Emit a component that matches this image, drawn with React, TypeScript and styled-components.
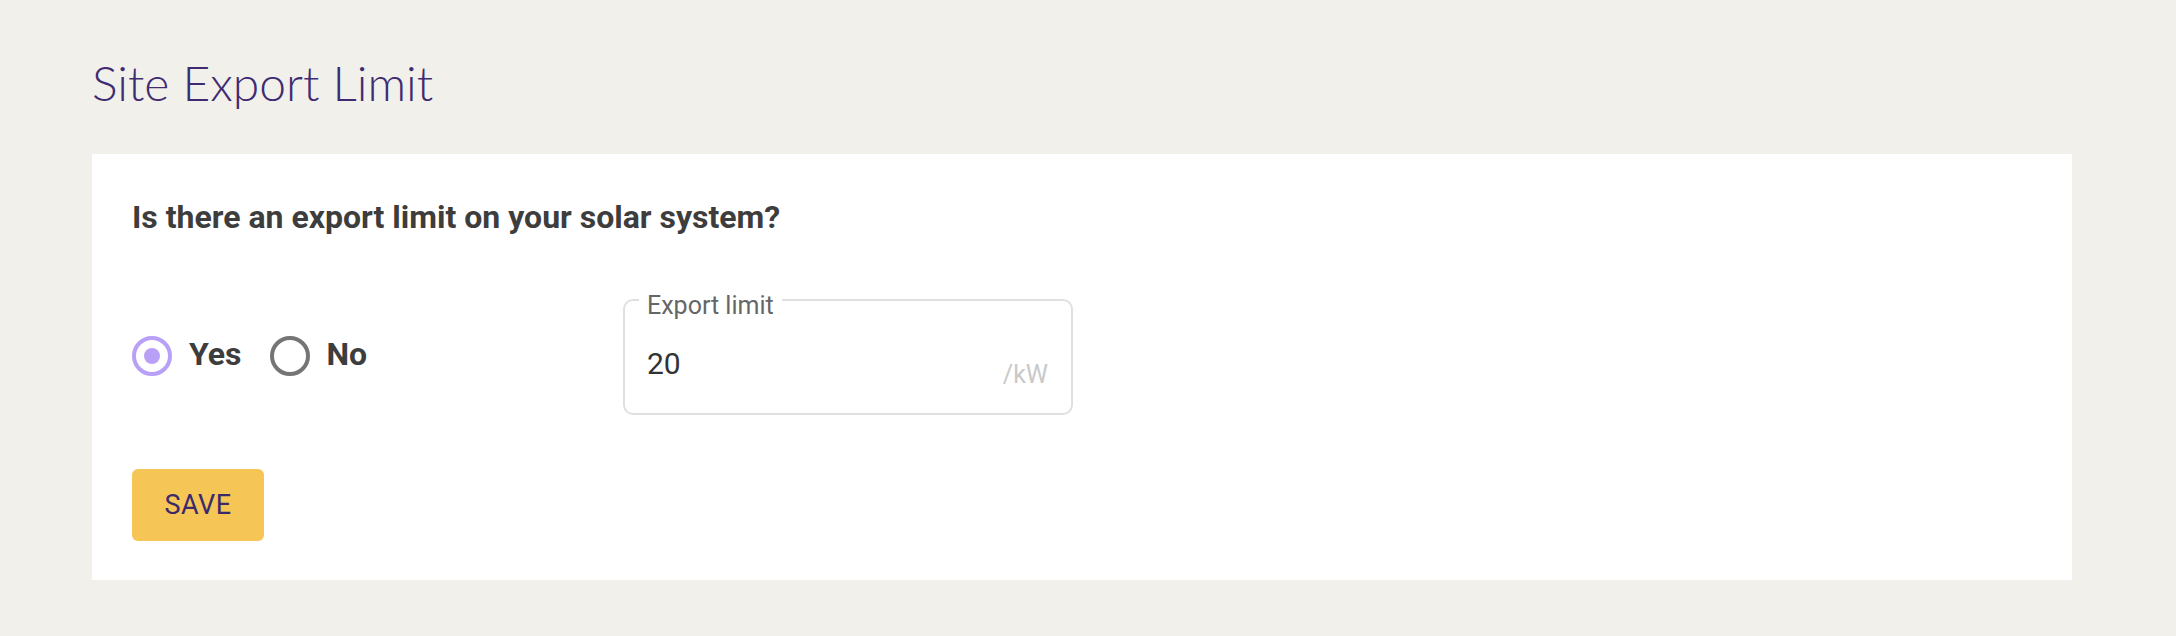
import React, { useState } from "react";
import styled, { createGlobalStyle } from "styled-components";

const GlobalStyle = createGlobalStyle`
  html, body {
    margin: 0;
    padding: 0;
    background: #f1f0eb;
  }
  body {
    font-family: Roboto, "Liberation Sans", sans-serif;
  }
`;

const Page = styled.div`
  padding: 59px 104px 50px 92px;
`;

const Title = styled.h1`
  margin: 0 0 47px 0;
  font-family: Lato, "Liberation Sans", sans-serif;
  font-weight: 300;
  font-size: 48px;
  line-height: 48px;
  color: #3f2b72;
  letter-spacing: 0;
`;

const Card = styled.section`
  background: #ffffff;
  padding: 44px 40px 39px;
  display: flex;
  flex-direction: column;
  align-items: flex-start;
`;

const Question = styled.h2`
  margin: 0;
  font-family: Roboto, "Liberation Sans", sans-serif;
  font-weight: 700;
  font-size: 32px;
  line-height: 38px;
  color: #3d3d3d;
`;

const Row = styled.div`
  margin-top: 63px;
  display: flex;
  align-items: center;
`;

const RadioGroup = styled.div`
  display: flex;
  align-items: center;
  width: 491px;
  padding-bottom: 6px;
`;

const RadioOption = styled.label`
  display: flex;
  align-items: center;
  gap: 17px;
  margin-right: 28px;
  cursor: pointer;
  font-family: Roboto, "Liberation Sans", sans-serif;
  font-weight: 700;
  font-size: 32px;
  line-height: 38px;
  color: #3d3d3d;
`;

const RadioCircle = styled.span<{ $checked: boolean }>`
  box-sizing: border-box;
  width: 40px;
  height: 40px;
  border-radius: 50%;
  border: 4px solid ${(p) => (p.$checked ? "#b9a0f7" : "#757575")};
  display: flex;
  align-items: center;
  justify-content: center;
  margin-top: 4px;
  &::after {
    content: "";
    width: 16px;
    height: 16px;
    border-radius: 50%;
    background: ${(p) => (p.$checked ? "#b9a0f7" : "transparent")};
  }
`;

const Field = styled.div`
  position: relative;
  box-sizing: border-box;
  width: 450px;
  height: 116px;
  border: 2px solid #e0e0e0;
  border-radius: 10px;
  display: flex;
  align-items: flex-end;
  justify-content: space-between;
  padding: 0 23px 24px 22px;
`;

const FieldLabel = styled.span`
  position: absolute;
  left: 14px;
  top: -10px;
  padding: 0 8px;
  background: #ffffff;
  font-family: Roboto, "Liberation Sans", sans-serif;
  font-size: 25px;
  line-height: 29px;
  color: #666666;
`;

const Value = styled.span`
  font-family: Roboto, "Liberation Sans", sans-serif;
  font-size: 30px;
  line-height: 35px;
  color: #333333;
  margin-bottom: 8px;
`;

const Unit = styled.span`
  font-family: Roboto, "Liberation Sans", sans-serif;
  font-size: 25px;
  line-height: 29px;
  color: #c9c9c9;
`;

const SaveButton = styled.button`
  margin-top: 54px;
  width: 132px;
  height: 72px;
  border: none;
  border-radius: 6px;
  background: #f5c556;
  color: #3b2a6b;
  font-family: Roboto, "Liberation Sans", sans-serif;
  font-size: 27px;
  font-weight: 400;
  letter-spacing: 0.5px;
  cursor: pointer;
`;

export default function App() {
  const [choice, setChoice] = useState<"yes" | "no">("yes");
  return (
    <>
      <GlobalStyle />
      <Page>
        <Title>Site Export Limit</Title>
        <Card>
          <Question>Is there an export limit on your solar system?</Question>
          <Row>
            <RadioGroup>
              <RadioOption onClick={() => setChoice("yes")}>
                <RadioCircle $checked={choice === "yes"} />
                Yes
              </RadioOption>
              <RadioOption onClick={() => setChoice("no")}>
                <RadioCircle $checked={choice === "no"} />
                No
              </RadioOption>
            </RadioGroup>
            <Field>
              <FieldLabel>Export limit</FieldLabel>
              <Value>20</Value>
              <Unit>/kW</Unit>
            </Field>
          </Row>
          <SaveButton>SAVE</SaveButton>
        </Card>
      </Page>
    </>
  );
}
